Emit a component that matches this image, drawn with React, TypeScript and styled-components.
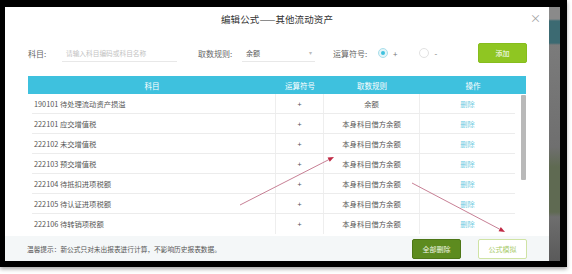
import styled, { createGlobalStyle } from 'styled-components'

const GlobalStyle = createGlobalStyle`
  html, body {
    margin: 0;
    padding: 0;
    background: #fff;
  }
  body {
    font-family: "Noto Sans CJK SC", "Noto Sans", sans-serif;
  }
  * { box-sizing: border-box; }
`

const Screen = styled.div`
  position: relative;
  width: 572px;
  height: 274px;
  overflow: hidden;
`

const Frame = styled.div`
  display: flex;
  width: 567px;
  height: 267px;
  padding: 7px 7px 6px 5px;
  background: #000;
  box-shadow: 0 2px 4px rgba(0, 0, 0, 0.35);
`

const Dialog = styled.div`
  display: flex;
  flex-direction: column;
  width: 544px;
  height: 254px;
  background: #fff;
`

const Backdrop = styled.div`
  flex: 1;
  background: linear-gradient(
    to bottom,
    #8a8a8a 0px,
    #8a8a8a 12px,
    #3c6a72 14px,
    #3c6a72 36px,
    #7b7b7b 38px,
    #6f6f6f 140px,
    #5f6a52 160px,
    #5f6a52 205px,
    #6e6e6e 210px,
    #5a5a5a 100%
  );
`

const Header = styled.div`
  display: grid;
  grid-template-columns: 1fr auto 1fr;
  align-items: center;
  height: 23px;
`

const Title = styled.div`
  grid-column: 2;
  font-size: 9.5px;
  color: #333;
  letter-spacing: 0.1px;
`

const Close = styled.div`
  justify-self: end;
  margin-right: 8px;
  font-size: 11px;
  color: #a0a0a0;
  line-height: 1;
`

const FilterRow = styled.div`
  display: flex;
  align-items: center;
  height: 20px;
  margin-top: 13px;
  padding: 0 22px 0 23px;
`

const Label = styled.span<{ $w: number; $ml?: number }>`
  width: ${({ $w }) => $w}px;
  margin-left: ${({ $ml = 0 }) => $ml}px;
  font-size: 8px;
  color: #666;
  white-space: nowrap;
`

const Field = styled.div<{ $w: number }>`
  position: relative;
  display: flex;
  align-items: center;
  width: ${({ $w }) => $w}px;
  height: 17px;
  padding: 0 3px 0 4px;
  border-bottom: 1px solid #e8e8e8;
  font-size: 7px;
`

const Placeholder = styled.span`
  color: #c2c2c2;
  font-size: 6.7px;
`

const Value = styled.span`
  flex: 1;
  color: #555;
  font-size: 7px;
`

const Caret = styled.span`
  color: #bbb;
  font-size: 6px;
`

const Radio = styled.span<{ $checked?: boolean; $ml?: number }>`
  display: inline-flex;
  align-items: center;
  justify-content: center;
  width: 10px;
  height: 10px;
  margin-left: ${({ $ml = 0 }) => $ml}px;
  border-radius: 50%;
  border: 1px solid ${({ $checked }) => ($checked ? '#a9dfeb' : '#e2e2e2')};
  background: ${({ $checked }) => ($checked ? '#e3f5f9' : '#fff')};

  &::after {
    content: "";
    width: 4px;
    height: 4px;
    border-radius: 50%;
    background: ${({ $checked }) => ($checked ? '#3ec1de' : 'transparent')};
  }
`

const Sign = styled.span`
  margin-left: 5px;
  font-size: 8px;
  color: #777;
`

const Button = styled.button<{ $variant: 'lime' | 'dark' | 'ghost' }>`
  width: 49px;
  height: 20px;
  padding: 0;
  border-radius: 2px;
  font-family: inherit;
  font-size: 7px;
  ${({ $variant }) =>
    $variant === 'lime'
      ? `background: #8fc622; border: 1px solid #86bd1d; color: #fff;`
      : $variant === 'dark'
        ? `background: #5d8b1f; border: 1px solid #4d7616; color: #f2f7e6;`
        : `background: #fff; border: 1px solid #cfe3a4; color: #a8cb6a;`}
`

const AddButton = styled(Button)`
  margin-left: auto;
`

const Table = styled.div`
  margin: 13px 23px 0 23px;
`

const HeadRow = styled.div`
  display: grid;
  grid-template-columns: 248px 48px 96px 1fr;
  height: 18px;
  background: #3ec1de;
  color: #fff;
  font-size: 7.5px;
`

const HeadCell = styled.div`
  display: flex;
  align-items: center;
  justify-content: center;
`

const Body = styled.div`
  display: flex;
  height: 140px;
`

const Rows = styled.div`
  flex: 1;
  padding: 0 6px 0 4px;
`

const Row = styled.div`
  display: grid;
  grid-template-columns: 243px 48px 96px 1fr;
  height: 20px;
  border-bottom: 1px solid #ececec;
  font-size: 7.3px;
  color: #555;

  &:last-child {
    border-bottom: none;
  }
`

const Cell = styled.div<{ $align?: 'left' | 'center'; $link?: boolean; $divider?: boolean }>`
  display: flex;
  align-items: center;
  justify-content: ${({ $align = 'center' }) => ($align === 'left' ? 'flex-start' : 'center')};
  padding-left: ${({ $align }) => ($align === 'left' ? '2px' : '0')};
  border-left: ${({ $divider }) => ($divider ? '1px solid #eeeeee' : 'none')};
  color: ${({ $link }) => ($link ? '#72cde2' : 'inherit')};
`

const Track = styled.div`
  width: 5px;
  padding-top: 1px;
`

const Thumb = styled.div`
  height: 85px;
  background: #b9b9b9;
  border-radius: 1px;
`

const Footer = styled.div`
  display: flex;
  align-items: center;
  gap: 17px;
  height: 25px;
  margin-top: 2px;
  padding: 0 22px 0 22px;
  background: #f4f7f8;
`

const Tip = styled.span`
  flex: 1;
  font-size: 6.7px;
  color: #555;
`

const Annotations = styled.svg`
  position: absolute;
  left: 0;
  top: 0;
  pointer-events: none;
`

const rows = [
  { name: '190101 待处理流动资产损溢', rule: '余额' },
  { name: '222101 应交增值税', rule: '本身科目借方余额' },
  { name: '222102 未交增值税', rule: '本身科目借方余额' },
  { name: '222103 预交增值税', rule: '本身科目借方余额' },
  { name: '222104 待抵扣进项税额', rule: '本身科目借方余额' },
  { name: '222105 待认证进项税额', rule: '本身科目借方余额' },
  { name: '222106 待转销项税额', rule: '本身科目借方余额' },
]

const Arrow = ({ x1, y1, x2, y2 }: { x1: number; y1: number; x2: number; y2: number }) => {
  const a = Math.atan2(y2 - y1, x2 - x1)
  const len = 6
  const w = 2.4
  const bx = x2 - len * Math.cos(a)
  const by = y2 - len * Math.sin(a)
  const px = -Math.sin(a) * w
  const py = Math.cos(a) * w
  return (
    <g>
      <line x1={x1} y1={y1} x2={bx} y2={by} stroke="#b9607a" strokeWidth="0.8" />
      <polygon points={`${x2},${y2} ${bx + px},${by + py} ${bx - px},${by - py}`} fill="#c02a45" />
    </g>
  )
}

export default function App() {
  return (
    <Screen>
      <GlobalStyle />
      <Frame>
        <Dialog>
          <Header>
            <Title>编辑公式——其他流动资产</Title>
            <Close>×</Close>
          </Header>

          <FilterRow>
            <Label $w={34}>科目:</Label>
            <Field $w={115}>
              <Placeholder>请输入科目编码或科目名称</Placeholder>
            </Field>
            <Label $w={44} $ml={21}>取数规则:</Label>
            <Field $w={73}>
              <Value>余额</Value>
              <Caret>▾</Caret>
            </Field>
            <Label $w={45} $ml={18}>运算符号:</Label>
            <Radio $checked />
            <Sign>+</Sign>
            <Radio $ml={22} />
            <Sign>-</Sign>
            <AddButton $variant="lime">添加</AddButton>
          </FilterRow>

          <Table>
            <HeadRow>
              <HeadCell>科目</HeadCell>
              <HeadCell>运算符号</HeadCell>
              <HeadCell>取数规则</HeadCell>
              <HeadCell>操作</HeadCell>
            </HeadRow>
            <Body>
              <Rows>
                {rows.map((r) => (
                  <Row key={r.name}>
                    <Cell $align="left">{r.name}</Cell>
                    <Cell $divider>+</Cell>
                    <Cell $divider>{r.rule}</Cell>
                    <Cell $divider $link>删除</Cell>
                  </Row>
                ))}
              </Rows>
              <Track>
                <Thumb />
              </Track>
            </Body>
          </Table>

          <Footer>
            <Tip>温馨提示：新公式只对未出报表进行计算，不影响历史报表数据。</Tip>
            <Button $variant="dark">全部删除</Button>
            <Button $variant="ghost">公式模拟</Button>
          </Footer>
        </Dialog>
        <Backdrop />
      </Frame>

      <Annotations width="572" height="274" viewBox="0 0 572 274">
        <Arrow x1={240} y1={205} x2={334} y2={157} />
        <Arrow x1={412} y1={183} x2={505} y2={232} />
      </Annotations>
    </Screen>
  )
}
